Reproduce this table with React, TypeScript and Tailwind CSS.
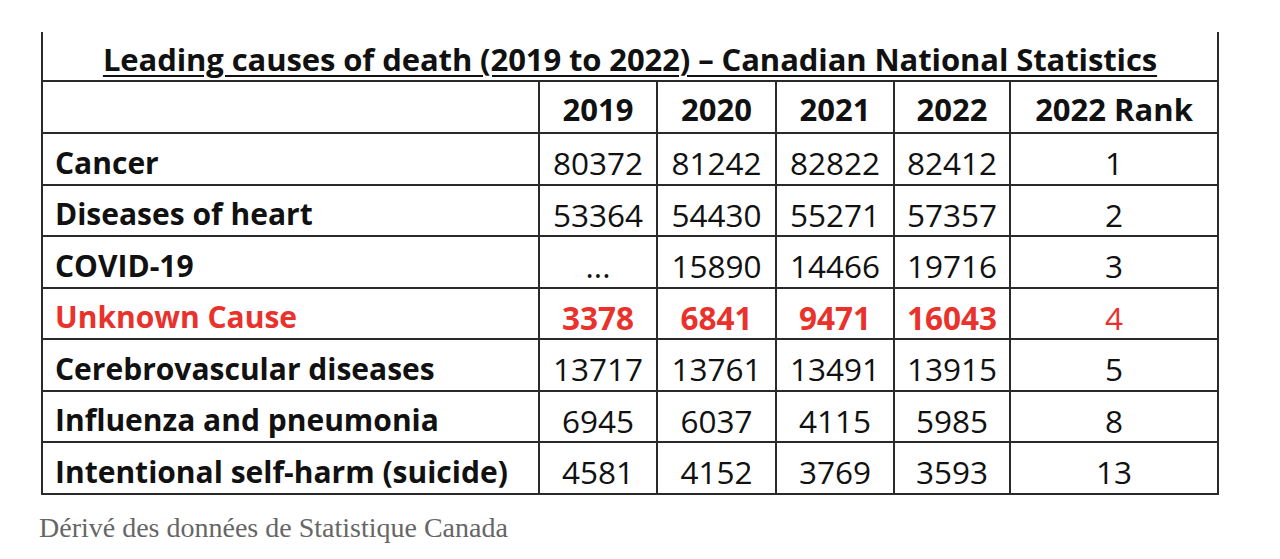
import React from "react";

type Row = { label: string; values: string[]; rank: string; red?: boolean };

const rows: Row[] = [
  { label: "Cancer", values: ["80372", "81242", "82822", "82412"], rank: "1" },
  { label: "Diseases of heart", values: ["53364", "54430", "55271", "57357"], rank: "2" },
  { label: "COVID-19", values: ["...", "15890", "14466", "19716"], rank: "3" },
  { label: "Unknown Cause", values: ["3378", "6841", "9471", "16043"], rank: "4", red: true },
  { label: "Cerebrovascular diseases", values: ["13717", "13761", "13491", "13915"], rank: "5" },
  { label: "Influenza and pneumonia", values: ["6945", "6037", "4115", "5985"], rank: "8" },
  { label: "Intentional self-harm (suicide)", values: ["4581", "4152", "3769", "3593"], rank: "13" },
];

export default function App() {
  return (
    <div className="w-[1280px] h-[559px] bg-white overflow-hidden">
      <div className="pl-[41px] pt-[32px]">
        <table
          className="border-collapse table-fixed text-[#111]"
          style={{ fontFamily: "'Open Sans', Lato, sans-serif" }}
        >
          <colgroup>
            <col className="w-[497px]" />
            <col className="w-[118px]" />
            <col className="w-[119px]" />
            <col className="w-[118px]" />
            <col className="w-[116px]" />
            <col className="w-[208px]" />
          </colgroup>
          <tbody>
            <tr className="h-[49px]">
              <td
                colSpan={6}
                className="border-x-2 border-b-2 border-[#2a2a2a] text-center align-middle p-0 pt-[8px]"
              >
                <span className="text-[31px] font-bold underline decoration-2 underline-offset-[4px] leading-none tracking-[-0.1px]">
                  Leading causes of death (2019 to 2022) – Canadian National Statistics
                </span>
              </td>
            </tr>
            <tr className="h-[52px]">
              <td className="border-2 border-[#2a2a2a] p-0" />
              {["2019", "2020", "2021", "2022", "2022 Rank"].map((h) => (
                <td
                  key={h}
                  className="border-2 border-[#2a2a2a] p-0 pt-[4px] text-center align-middle text-[31px] font-bold leading-none"
                >
                  {h}
                </td>
              ))}
            </tr>
            {rows.map((r) => (
              <tr key={r.label} className="h-[51.5px]">
                <td
                  className={
                    "border-2 border-[#2a2a2a] pl-[12px] pr-0 pt-[8px] pb-0 align-middle text-[30px] font-bold leading-none whitespace-nowrap " +
                    (r.red ? "text-[#e8322b]" : "")
                  }
                >
                  {r.label}
                </td>
                {r.values.map((v, i) => (
                  <td
                    key={i}
                    className={
                      "border-2 border-[#2a2a2a] p-0 pt-[8px] text-center align-middle text-[31.5px] leading-none " +
                      (r.red ? "text-[#e8322b] font-bold text-[30px]" : "font-normal")
                    }
                  >
                    {v}
                  </td>
                ))}
                <td
                  className={
                    "border-2 border-[#2a2a2a] p-0 pt-[8px] text-center align-middle text-[31.5px] leading-none " +
                    (r.red ? "text-[#e8322b]" : "")
                  }
                >
                  {r.rank}
                </td>
              </tr>
            ))}
          </tbody>
        </table>
      </div>
      <p
        className="pl-[39px] pt-[19px] text-[28px] text-[#666666] leading-none"
        style={{ fontFamily: "'Liberation Serif', 'DejaVu Serif', serif" }}
      >
        Dérivé des données de Statistique Canada
      </p>
    </div>
  );
}
